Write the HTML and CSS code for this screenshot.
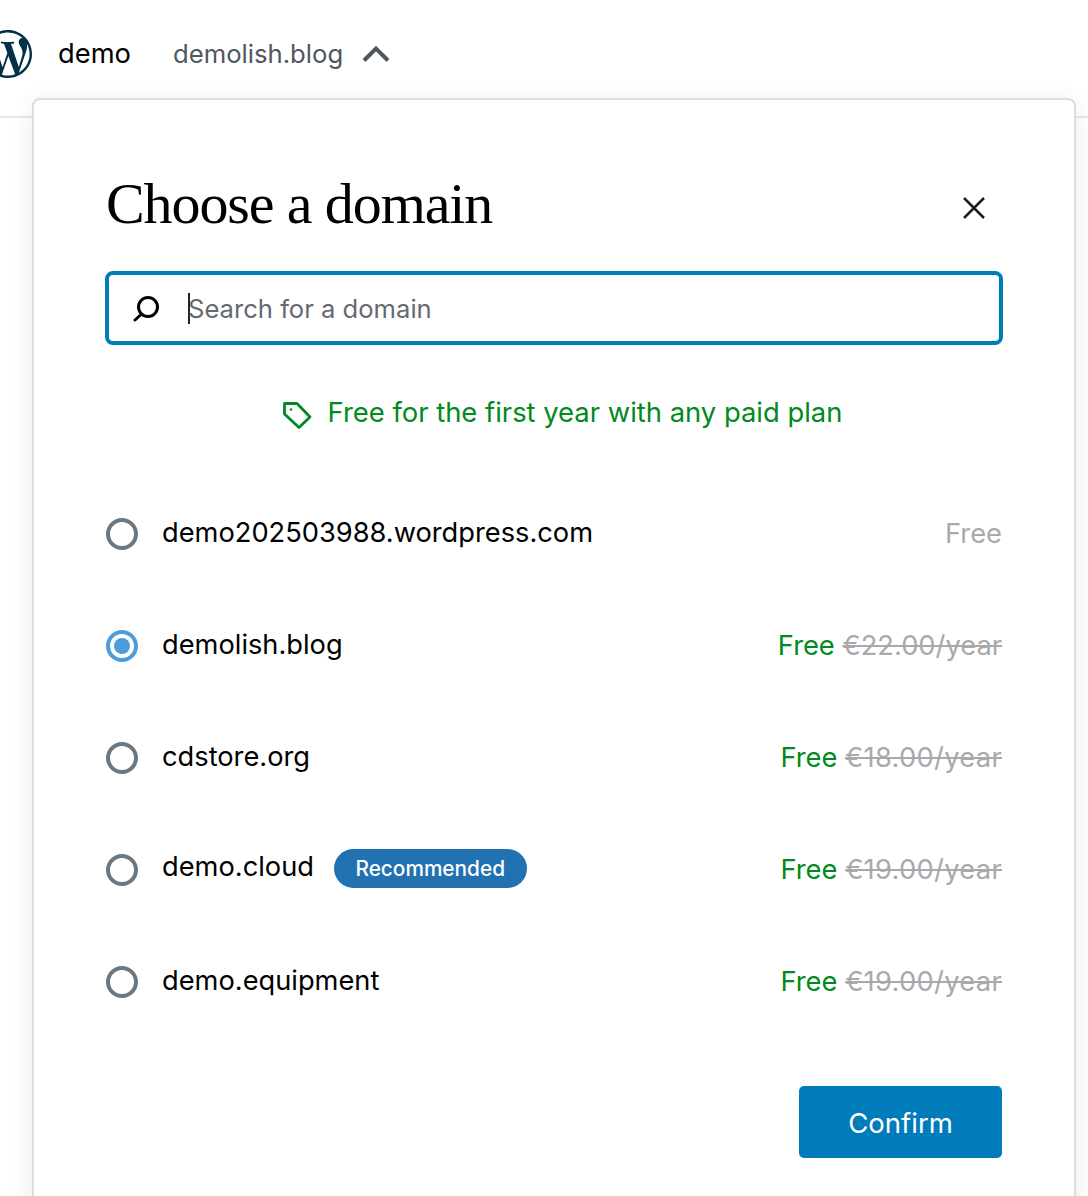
FILE: index.html
```html
<!DOCTYPE html>
<html lang="en">
<head>
  <meta charset="UTF-8">
  <meta name="viewport" content="width=device-width, initial-scale=1.0">
  <title>Choose a domain</title>
  <link rel="stylesheet" href="styles.css">
</head>
<body>
  <header class="topbar">
    <svg class="logo" viewBox="0 0 24 24" aria-hidden="true"><path d="M21.469 6.825c.84 1.537 1.318 3.3 1.318 5.175 0 3.979-2.156 7.456-5.363 9.325l3.295-9.527c.615-1.54.82-2.771.82-3.864 0-.405-.026-.78-.07-1.11m-7.981.105c.647-.03 1.232-.105 1.232-.105.582-.075.514-.93-.067-.899 0 0-1.755.135-2.88.135-1.064 0-2.85-.15-2.85-.15-.585-.03-.661.855-.075.885 0 0 .54.061 1.125.09l1.68 4.605-2.37 7.08L5.354 6.9c.649-.03 1.234-.1 1.234-.1.585-.075.516-.93-.065-.896 0 0-1.746.138-2.874.138-.2 0-.438-.008-.69-.015C4.911 3.15 8.235 1.215 12 1.215c2.809 0 5.365 1.072 7.286 2.833-.046-.003-.091-.009-.141-.009-1.06 0-1.812.923-1.812 1.914 0 .89.513 1.643 1.06 2.531.411.72.89 1.643.89 2.977 0 .915-.354 1.994-.821 3.479l-1.075 3.585-3.9-11.61.001.014zM12 22.784c-1.059 0-2.081-.153-3.048-.437l3.237-9.406 3.315 9.087c.024.053.05.101.078.149-1.12.393-2.325.609-3.582.609M1.211 12c0-1.564.336-3.05.935-4.39L7.29 21.709C3.694 19.96 1.212 16.271 1.211 12M12 0C5.385 0 0 5.385 0 12s5.385 12 12 12 12-5.385 12-12S18.615 0 12 0"/></svg>
    <span class="site-name">demo</span>
    <span class="site-domain">demolish.blog</span>
    <svg class="chevron" viewBox="0 0 28 18" aria-hidden="true"><path d="M2 15.5 14 3.5l12 12"/></svg>
  </header>

  <div class="popover">
    <div class="popover-head">
      <h1>Choose a domain</h1>
      <svg class="close" viewBox="0 0 24 24" aria-hidden="true"><path d="M2 2l20 20M22 2 2 22"/></svg>
    </div>

    <div class="search">
      <svg class="search-icon" viewBox="0 0 28 28" aria-hidden="true"><circle cx="15" cy="13" r="9.500"/><path d="M8.500 20 2 26"/></svg>
      <span class="caret"></span>
      <input type="text" placeholder="Search for a domain">
    </div>

    <p class="promo">
      <svg class="tag" viewBox="0 0 30 30" aria-hidden="true"><path d="M2.500 3.500h12.500l13 13.500-11 10.500L2.500 14z"/><circle cx="9" cy="9.500" r="1.300"/></svg>
      Free for the first year with any paid plan
    </p>

    <ul class="domains">
      <li class="domain">
        <span class="radio"></span>
        <span class="domain-name">demo202503988.wordpress.com</span>
        <span class="price"><span class="muted">Free</span></span>
      </li>
      <li class="domain">
        <span class="radio checked"></span>
        <span class="domain-name">demolish.blog</span>
        <span class="price"><span class="free">Free</span> <s>€22.00/year</s></span>
      </li>
      <li class="domain">
        <span class="radio"></span>
        <span class="domain-name">cdstore.org</span>
        <span class="price"><span class="free">Free</span> <s class="has-one">€18.00/year</s></span>
      </li>
      <li class="domain has-badge">
        <span class="radio"></span>
        <span class="domain-name">demo.cloud</span>
        <span class="badge">Recommended</span>
        <span class="price"><span class="free">Free</span> <s class="has-one">€19.00/year</s></span>
      </li>
      <li class="domain">
        <span class="radio"></span>
        <span class="domain-name">demo.equipment</span>
        <span class="price"><span class="free">Free</span> <s class="has-one">€19.00/year</s></span>
      </li>
    </ul>

    <div class="actions">
      <button class="confirm" type="button">Confirm</button>
    </div>
  </div>
</body>
</html>
```

FILE: styles.css
```css
* {
  margin: 0;
  padding: 0;
  box-sizing: border-box;
  font-family: Inter, 'Liberation Sans', sans-serif;
}

html, body {
  height: 1196px;
  overflow: hidden;
}

body {
  background-color: #fff;
  color: #000;
  position: relative;
}

.topbar {
  height: 118px;
  display: flex;
  align-items: center;
  padding-bottom: 9px;
  border-bottom: 2px solid #e6e6e6;
}

.logo {
  width: 48px;
  height: 48px;
  margin-left: -16px;
  fill: #023047;
  flex-shrink: 0;
}

.site-name {
  font-size: 27.300px;
  margin-left: 26px;
}

.site-domain {
  font-size: 25.700px;
  color: #50575e;
  margin-left: 42px;
}

.chevron {
  width: 28px;
  height: 18px;
  margin-left: 19px;
  fill: none;
  stroke: #50575e;
  stroke-width: 4;
}

.popover {
  position: absolute;
  top: 98px;
  left: 32px;
  width: 1044px;
  height: 1130px;
  padding: 71px 72px 0;
  background-color: #fff;
  border: 2px solid #ddd;
  border-radius: 8px;
  box-shadow: 0 4px 24px rgba(0, 0, 0, 0.08);
}

.popover-head {
  display: flex;
  justify-content: space-between;
  align-items: center;
  height: 64px;
  margin-bottom: 36px;
}

h1 {
  font-family: 'Liberation Serif', serif;
  font-size: 58px;
  font-weight: 400;
  letter-spacing: -1.100px;
}

.close {
  width: 24px;
  height: 24px;
  margin-right: 16px;
  margin-top: 10px;
  fill: none;
  stroke: #1e1e1e;
  stroke-width: 2.500;
}

.search {
  height: 74px;
  display: flex;
  align-items: center;
  padding-left: 25px;
  border: 4px solid #007cba;
  border-radius: 8px;
  margin-left: -1px;
  margin-right: -1px;
}

.search-icon {
  width: 28px;
  height: 28px;
  margin-left: -1px;
  fill: none;
  stroke: #000;
  stroke-width: 3;
  stroke-linecap: round;
  flex-shrink: 0;
}

.caret {
  width: 2px;
  height: 31px;
  margin-left: 27px;
  background-color: #1d2327;
  flex-shrink: 0;
}

.search input {
  flex: 1;
  border: none;
  outline: none;
  font-size: 25.600px;
  color: #000;
  background: transparent;
  margin-left: -2px;
}

.search input::placeholder {
  color: #646970;
  opacity: 1;
}

.promo {
  display: flex;
  justify-content: center;
  align-items: center;
  gap: 16px;
  margin-top: 49px;
  margin-left: 16px;
  height: 36px;
  font-size: 27.400px;
  color: #008a20;
}

.tag {
  width: 30px;
  height: 30px;
  margin-top: 5px;
  fill: none;
  stroke: #008a20;
  stroke-width: 2.800;
  stroke-linejoin: round;
}

.tag circle {
  fill: #008a20;
  stroke: none;
}

.domains {
  list-style: none;
  margin-top: 48px;
}

.domain {
  height: 112px;
  display: flex;
  align-items: center;
}

.radio {
  width: 32px;
  height: 32px;
  border: 4px solid #6c7781;
  border-radius: 50%;
  flex-shrink: 0;
  margin-right: 24px;
}

.radio.checked {
  border-color: #4f9bdc;
  padding: 4px;
  background-color: #4f9bdc;
  background-clip: content-box;
}

.domain-name {
  font-size: 27.250px;
  margin-bottom: 4px;
}

.has-badge .domain-name {
  margin-bottom: 8px;
}

.badge {
  margin-left: 20px;
  margin-bottom: 3px;
  height: 39px;
  padding: 0 21.500px;
  display: flex;
  align-items: center;
  border-radius: 20px;
  background-color: #2271b1;
  color: #fff;
  font-size: 20.800px;
  font-weight: 500;
}

.price {
  margin-left: auto;
  margin-bottom: 2px;
  font-size: 27.300px;
}

.muted,
.price s {
  color: #a7aaad;
}

.price s.has-one {
  letter-spacing: 0.300px;
}

.free {
  color: #008a20;
}

.actions {
  display: flex;
  justify-content: flex-end;
  margin-top: 48px;
}

.confirm {
  width: 203px;
  height: 72px;
  border: none;
  border-radius: 5px;
  background-color: #007cba;
  color: #fff;
  font-size: 27.500px;
  padding-top: 1px;
}
```
